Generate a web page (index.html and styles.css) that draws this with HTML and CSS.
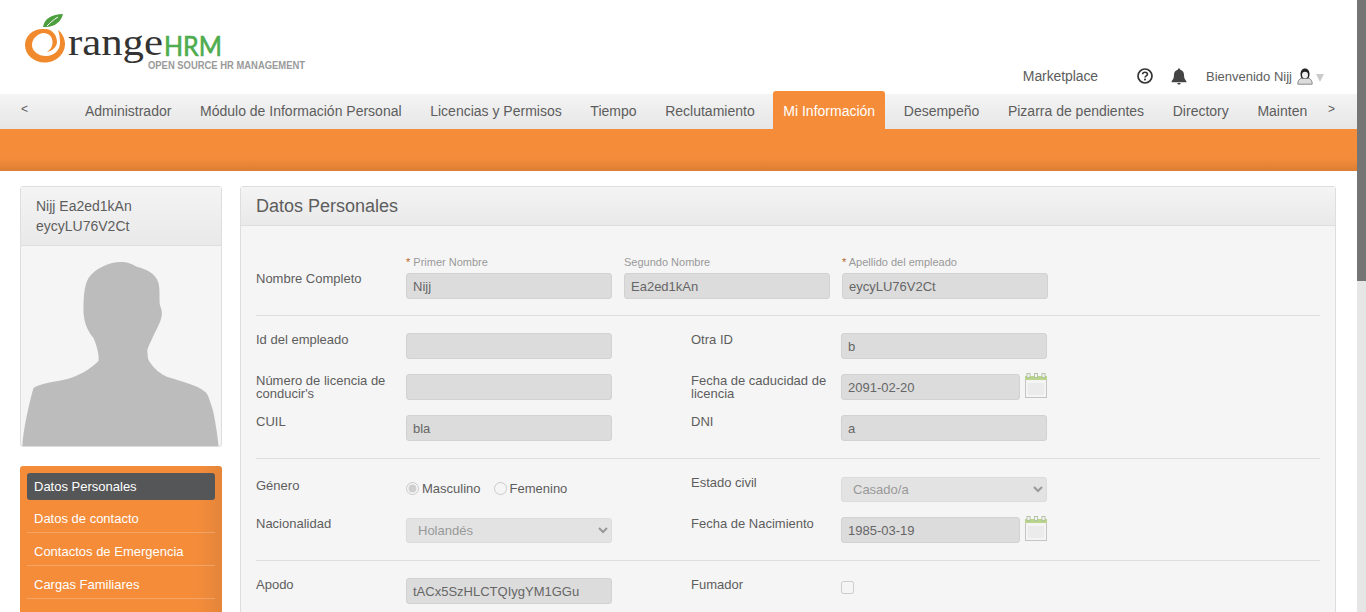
FILE: index.html
```html
<!DOCTYPE html>
<html lang="es">
<head>
    <meta charset="UTF-8">
    <meta name="viewport" content="width=device-width, initial-scale=1.0">
    <title>OrangeHRM - Datos Personales</title>
    <link rel="stylesheet" href="styles.css">
</head>
<body>
<div class="page">
    <div class="main">
        <header class="top">
            <svg class="logo" width="320" height="80" viewBox="0 0 320 80">
                <path d="M45 29C33 28 25 36 25 45C25 55 34 62.5 45 62.5C56 62.5 65 54 65 44C65 38 62 33 58 30C59.5 34 60 39 60 43C60 50 54 56 46 56C38 56 32 51 32 45C32 39 37 34 43 33C49 33 53 37 52.5 43C52.5 47 50 50 47 52C52 51 57 47 57 42C57 35 52 29 45 29Z" fill="#f18a2d"/>
                <path d="M43 27C44 19 52 14 63 14C61 22 54 28 43 27Z" fill="#4d9e3f"/>
                <path d="M47 26C50 23 53 20 58 17" fill="none" stroke="#fff" stroke-width="1"/>
                <text class="logo-word" x="68" y="55" textLength="95" lengthAdjust="spacingAndGlyphs">range</text>
                <text class="logo-hrm" x="164" y="56" textLength="58" lengthAdjust="spacingAndGlyphs">HRM</text>
                <text class="logo-tag" x="148" y="68.5" textLength="157" lengthAdjust="spacingAndGlyphs">OPEN SOURCE HR MANAGEMENT</text>
            </svg>
            <div class="top-links">
                <a class="market">Marketplace</a>
                <svg class="help" width="16" height="16" viewBox="0 0 16 16">
                    <circle cx="8" cy="8" r="7" fill="none" stroke="#333" stroke-width="1.7"/>
                    <path d="M5.6 6.3C5.7 4.9 6.7 4.2 8 4.2C9.4 4.2 10.4 5 10.4 6.2C10.4 7.8 8 7.8 8 9.6" fill="none" stroke="#333" stroke-width="1.6"/>
                    <rect x="7.1" y="10.6" width="1.8" height="1.8" fill="#333"/>
                </svg>
                <svg class="bell" width="16" height="17" viewBox="0 0 16 17">
                    <path d="M8 0.5C7.2 0.5 6.8 1 6.8 1.7C4.4 2.2 3 4.2 3 6.6C3 10 2.3 11.4 0.6 13.2V14.2H15.4V13.2C13.7 11.4 13 10 13 6.6C13 4.2 11.6 2.2 9.2 1.7C9.2 1 8.8 0.5 8 0.5ZM6.2 15C6.4 16 7.1 16.6 8 16.6C8.9 16.6 9.6 16 9.8 15Z" fill="#444"/>
                </svg>
                <span class="welcome">Bienvenido Nijj</span>
                <svg class="user" width="16" height="17" viewBox="0 0 16 17">
                    <path d="M0.8 16.2C0.8 13 1.8 11 5 9.8H11C14.2 11 15.2 13 15.2 16.2Z" fill="#dcdcdc" stroke="#8a8a8a" stroke-width="1"/>
                    <path d="M8 0.5C5 0.5 3.5 3 3.5 6C3.5 8 4 9.5 5 10.5H11C12 9.5 12.5 8 12.5 6C12.5 3 11 0.5 8 0.5Z" fill="#222"/>
                    <ellipse cx="8" cy="7" rx="3" ry="3.2" fill="#eee"/>
                </svg>
                <span class="caret"></span>
            </div>
        </header>

        <nav class="nav">
            <span class="nav-arrow">&lt;</span>
            <ul class="nav-list">
                <li><a>Administrador</a></li>
                <li><a>Módulo de Información Personal</a></li>
                <li><a>Licencias y Permisos</a></li>
                <li><a>Tiempo</a></li>
                <li><a>Reclutamiento</a></li>
                <li class="active"><a>Mi Información</a></li>
                <li><a>Desempeño</a></li>
                <li><a>Pizarra de pendientes</a></li>
                <li><a>Directory</a></li>
                <li><a>Mainten</a></li>
            </ul>
            <span class="nav-arrow">&gt;</span>
        </nav>
        <div class="band"></div>

        <div class="content">
            <aside class="side">
                <div class="profile">
                    <div class="profile-name">Nijj Ea2ed1kAn<br>eycyLU76V2Ct</div>
                    <div class="profile-photo">
                        <svg width="200" height="200" viewBox="0.5 1 200 200">
                            <path d="M2 201C2 190 8 160 13 143C20 138 35 137 47 134C58 131 70 124 78 116C79 110 76 100 73 93C68 87 64 80 63 68C63 55 63 42 68 33C74 24 88 17 100 17C108 17 111 19 117 22C125 24 135 28 138 38C140 46 138 58 140 62C142 66 142 72 139 78C136 85 133 90 131 95C129 100 126 104 127 108C127 113 128 116 130 118C134 124 140 129 147 132C157 135 168 138 177 142C183 145 187 148 188 152C190 158 192 163 193 168C195 178 197 190 198 201Z" fill="#bcbcbc"/>
                        </svg>
                    </div>
                </div>
                <ul class="side-menu">
                    <li class="active"><a>Datos Personales</a></li>
                    <li><a>Datos de contacto</a></li>
                    <li><a>Contactos de Emergencia</a></li>
                    <li><a>Cargas Familiares</a></li>
                </ul>
            </aside>

            <section class="panel">
                <h1 class="panel-head">Datos Personales</h1>
                <form class="panel-body">
                    <div class="sect name-row">
                        <label class="row-label name-label">Nombre Completo</label>
                        <div class="name-field">
                            <small><em>*</em> Primer Nombre</small>
                            <input type="text" value="Nijj" disabled>
                        </div>
                        <div class="name-field">
                            <small>Segundo Nombre</small>
                            <input type="text" value="Ea2ed1kAn" disabled>
                        </div>
                        <div class="name-field">
                            <small><em>*</em> Apellido del empleado</small>
                            <input type="text" value="eycyLU76V2Ct" disabled>
                        </div>
                    </div>

                    <div class="sect grid">
                        <label class="row-label">Id del empleado</label>
                        <div class="cell"><input type="text" disabled></div>
                        <label class="row-label">Otra ID</label>
                        <div class="cell"><input type="text" value="b" disabled></div>

                        <label class="row-label">Número de licencia de conducir's</label>
                        <div class="cell"><input type="text" disabled></div>
                        <label class="row-label">Fecha de caducidad de licencia</label>
                        <div class="cell date">
                            <input type="text" value="2091-02-20" disabled>
                            <svg class="cal" width="22" height="25" viewBox="0 0 22 25"><use href="#cal-icon"/></svg>
                        </div>

                        <label class="row-label">CUIL</label>
                        <div class="cell"><input type="text" value="bla" disabled></div>
                        <label class="row-label">DNI</label>
                        <div class="cell"><input type="text" value="a" disabled></div>
                    </div>

                    <div class="sect grid select-sect">
                        <label class="row-label gender-label">Género</label>
                        <div class="cell radios">
                            <input type="radio" name="gen" checked disabled><span>Masculino</span>
                            <input type="radio" name="gen" disabled><span>Femenino</span>
                        </div>
                        <label class="row-label civil-label">Estado civil</label>
                        <div class="cell">
                            <select disabled><option>Casado/a</option></select>
                        </div>

                        <label class="row-label">Nacionalidad</label>
                        <div class="cell sel-end">
                            <select disabled><option>Holandés</option></select>
                        </div>
                        <label class="row-label">Fecha de Nacimiento</label>
                        <div class="cell date">
                            <input type="text" value="1985-03-19" disabled>
                            <svg class="cal" width="22" height="25" viewBox="0 0 22 25"><use href="#cal-icon"/></svg>
                        </div>
                    </div>

                    <div class="sect grid">
                        <label class="row-label">Apodo</label>
                        <div class="cell"><input type="text" value="tACx5SzHLCTQIygYM1GGu" disabled></div>
                        <label class="row-label">Fumador</label>
                        <div class="cell"><input class="check" type="checkbox" disabled></div>
                    </div>
                </form>
            </section>
        </div>
    </div>
    <div class="scrollbar"><div class="thumb"></div></div>
</div>

<svg class="defs" width="0" height="0">
    <symbol id="cal-icon" viewBox="0 0 22 25">
        <rect x="0.5" y="4.5" width="21" height="20" fill="#f4f4f4" stroke="#c4c4c4"/>
        <rect x="0" y="3" width="22" height="4" fill="#b9d58c"/>
        <rect x="2" y="0.5" width="3" height="4" fill="#f4f4f4" stroke="#a9b99a" stroke-width="0.8"/>
        <rect x="9.5" y="0.5" width="3" height="4" fill="#f4f4f4" stroke="#a9b99a" stroke-width="0.8"/>
        <rect x="17" y="0.5" width="3" height="4" fill="#f4f4f4" stroke="#a9b99a" stroke-width="0.8"/>
        <rect x="3" y="10" width="16" height="12" fill="#ebebeb"/>
    </symbol>
</svg>
</body>
</html>
```

FILE: styles.css
```css
html, body {
    margin: 0;
    padding: 0;
    height: 100%;
    background-color: #fff;
}
body {
    font-family: "Liberation Sans", Arial, sans-serif;
    font-size: 13px;
    color: #5d5d5d;
}
ul {
    list-style: none;
    margin: 0;
    padding: 0;
}
.defs {
    position: absolute;
}
.page {
    display: flex;
    height: 612px;
    overflow: hidden;
}
.main {
    width: 1357px;
    flex: none;
}
.scrollbar {
    flex: 1;
    background-color: #e6e6e6;
}
.thumb {
    height: 281px;
    background-color: #757575;
}

/* header */
.top {
    display: flex;
    justify-content: space-between;
    height: 94px;
}
.logo {
    display: block;
}
.logo-word {
    font-family: "Liberation Serif", serif;
    font-size: 38px;
    fill: #333;
}
.logo-hrm {
    font-family: "Lato", sans-serif;
    font-size: 27px;
    fill: #4fac4f;
    stroke: #4fac4f;
    stroke-width: 0.6;
}
.logo-tag {
    font-family: "Liberation Sans", sans-serif;
    font-size: 10px;
    font-weight: bold;
    fill: #9a9a9a;
}
.top-links {
    display: flex;
    align-items: center;
    height: 26px;
    margin-top: 63px;
    margin-right: 33px;
}
.market {
    font-size: 14px;
    letter-spacing: -0.1px;
    color: #5d5d5d;
    margin-right: 39px;
}
.help {
    margin-right: 18px;
}
.bell {
    margin-right: 19px;
}
.welcome {
    font-size: 13px;
    margin-right: 5px;
}
.caret {
    width: 0;
    height: 0;
    margin: 4px 0 0 3px;
    border-left: 4px solid transparent;
    border-right: 4px solid transparent;
    border-top: 8px solid #ccc;
}

/* main nav */
.nav {
    display: flex;
    height: 35px;
    padding-left: 21px;
    background: linear-gradient(#f4f4f4, #e6e6e6);
}
.nav-arrow {
    font-size: 12px;
    line-height: 30px;
    width: 7px;
    flex: none;
}
.nav-list {
    display: flex;
    align-items: flex-end;
    gap: 8.65px;
    width: 1232px;
    height: 38px;
    margin: -3px 21px 0 47px;
    overflow: hidden;
    flex: none;
}
.nav-list a {
    display: block;
    padding: 0 10px;
    font-size: 14px;
    line-height: 35px;
    white-space: nowrap;
}
.nav-list .active {
    padding-top: 3px;
    background-color: #f48c3a;
    border-radius: 3px 3px 0 0;
    color: #fff;
}
.band {
    height: 42px;
    background: linear-gradient(#f48c3a 70%, #dc7e34);
}

/* layout */
.content {
    display: flex;
    align-items: flex-start;
    gap: 18px;
    padding: 15px 21px 0 20px;
}
.side {
    width: 202px;
    flex: none;
}
.profile {
    border: 1px solid #dedede;
    border-radius: 3px;
    background-color: #f5f5f5;
}
.profile-name {
    padding: 9px 15px 9px;
    height: 40px;
    font-size: 14px;
    line-height: 20px;
    background: linear-gradient(#f4f4f4, #e9e9e9);
    border-bottom: 1px solid #dedede;
}
.profile-photo {
    height: 200px;
}
.profile-photo svg {
    display: block;
}
.side-menu {
    margin-top: 19px;
    padding: 7px 7px 40px;
    border-radius: 3px 3px 0 0;
    background: linear-gradient(to right, #f48c3a 88%, #e3853a);
    color: #fff;
}
.side-menu li {
    margin-bottom: 5px;
    border-bottom: 1px solid rgba(255, 255, 255, 0.22);
}
.side-menu a {
    display: block;
    padding: 0 7px;
    font-size: 13px;
    line-height: 27px;
}
.side-menu li.active {
    border-bottom: none;
    border-radius: 3px;
    background-color: #555658;
}

/* panel */
.panel {
    flex: 1;
    border: 1px solid #dedede;
    border-radius: 3px;
    background-color: #f5f5f5;
}
.panel-head {
    margin: 0;
    padding: 0 15px;
    font-size: 18px;
    font-weight: normal;
    line-height: 38px;
    background: linear-gradient(#f4f4f4, #e9e9e9);
    border-bottom: 1px solid #dedede;
}
.panel-body {
    padding: 0 15px 60px;
}
.sect {
    padding: 17px 0;
    border-bottom: 1px solid #dedede;
}
.sect:last-child {
    border-bottom: none;
}
.name-row {
    display: flex;
    gap: 12px;
    padding: 30px 0 16px;
}
.select-sect {
    padding-top: 18px;
}
.grid {
    display: grid;
    grid-template-columns: 150px 285px 150px 206px;
    row-gap: 15px;
}
.row-label {
    font-size: 13px;
    line-height: 13px;
}
.name-label {
    width: 138px;
    padding-top: 16px;
}
.gender-label {
    padding-top: 2px;
}
.civil-label {
    margin-top: -1px;
}
.name-field small {
    display: block;
    margin-bottom: 4px;
    font-size: 11px;
    line-height: 13px;
    color: #999;
}
.name-field em {
    font-style: normal;
    color: #b5651d;
}
.cell {
    display: flex;
    width: 206px;
}
.sel-end {
    align-items: flex-end;
}
input[type="text"] {
    box-sizing: border-box;
    width: 206px;
    height: 26px;
    margin: 0;
    padding: 0 6px;
    font-family: inherit;
    font-size: 13px;
    color: #666;
    background-color: #dcdcdc;
    border: 1px solid #d2d2d2;
    border-radius: 3px;
}
select {
    box-sizing: border-box;
    width: 206px;
    height: 25px;
    margin: 0;
    padding-left: 7px;
    font-family: inherit;
    font-size: 13px;
    color: #999;
    background-color: #e3e3e3;
    border: 1px solid #dcdcdc;
    border-radius: 3px;
    opacity: 1;
}
.date {
    justify-content: space-between;
}
.date input[type="text"] {
    width: 179px;
}
.cal {
    display: block;
    margin-top: -1px;
}
.radios {
    align-items: center;
    align-self: start;
    height: 13px;
    margin-top: 5px;
}
.radios input {
    width: 13px;
    height: 13px;
    margin: 0 3px 0 0;
}
.radios span {
    margin-right: 13px;
}
.check {
    width: 13px;
    height: 13px;
    margin: 3px 0 0;
}
```
